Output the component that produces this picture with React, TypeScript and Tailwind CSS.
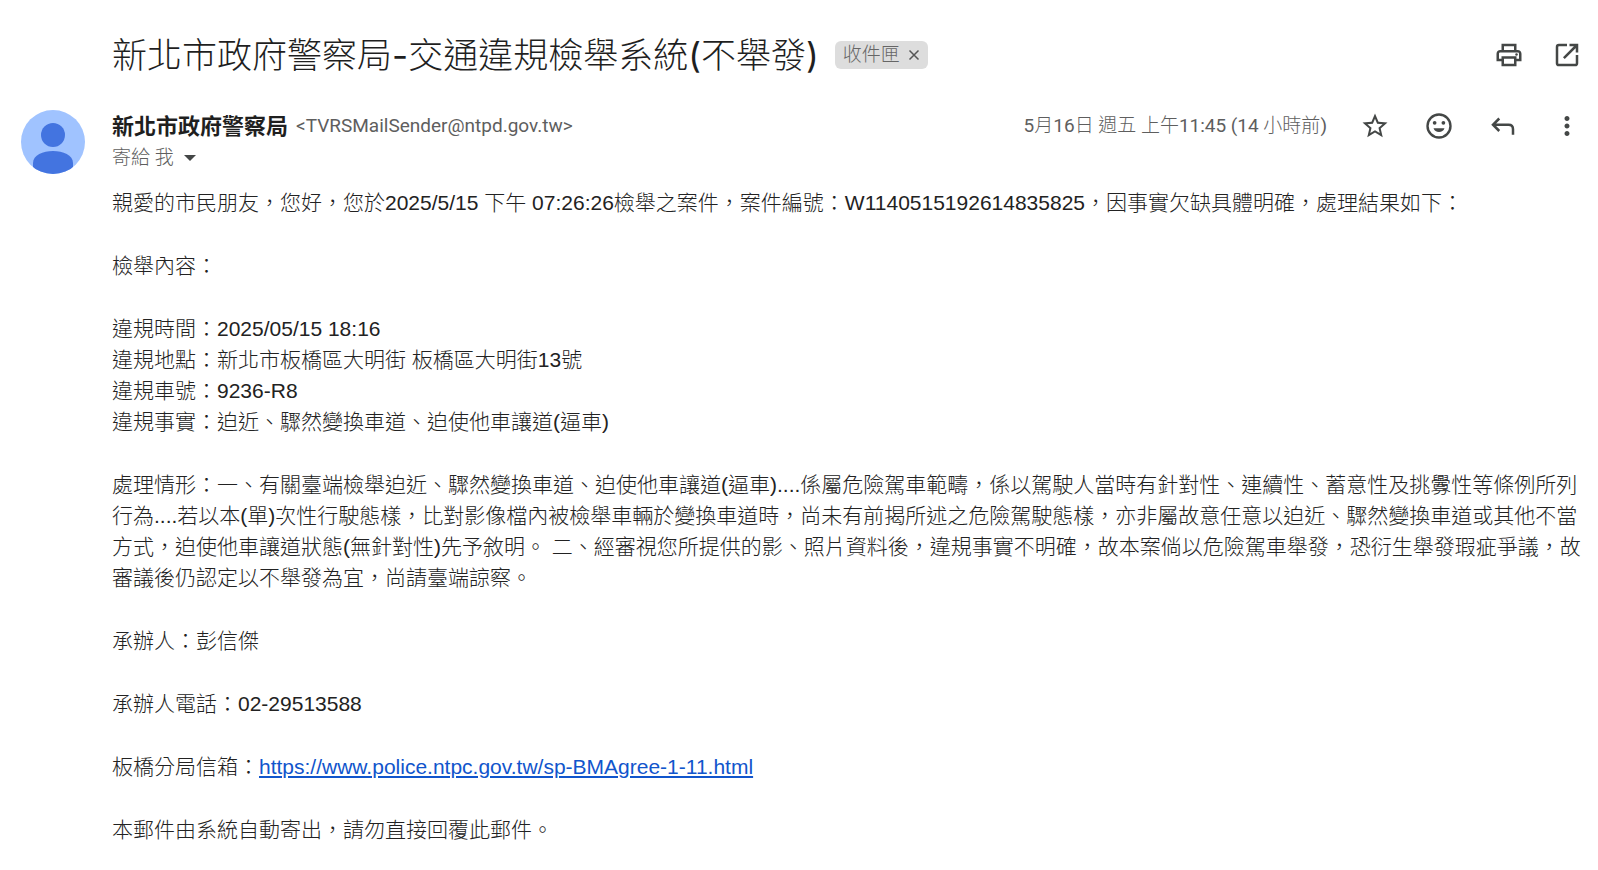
import { useState } from 'react';
import { MdMoreVert, MdOutlinePrint, MdStar, MdStarBorder } from 'react-icons/md';

const SENDER = '新北市政府警察局';
const REPORT_URL = 'https://www.police.ntpc.gov.tw/sp-BMAgree-1-11.html';

const titleFont = "font-[Inter,'Noto_Sans_CJK_TC',sans-serif]";
const uiFont = "font-[Roboto,'Noto_Sans_CJK_TC',sans-serif]";
const bodyFont = "font-['Liberation_Sans','Noto_Sans_CJK_TC',sans-serif]";

interface IconButtonProps {
  label: string;
  onClick?: () => void;
  children: React.ReactNode;
}

const IconButton: React.FC<IconButtonProps> = ({ label, onClick, children }) => (
  <button
    type="button"
    aria-label={label}
    title={label}
    onClick={onClick}
    className="flex size-8 items-center justify-center rounded-full text-[#444746] hover:bg-gray-100"
  >
    {children}
  </button>
);

// Light Chinese text with its Latin parts in regular weight
const MixedText = ({ text }: { text: string }) => (
  <>
    {text.split(/([!-~]+)/).map((part, i) =>
      i % 2 === 1 ? (
        <span key={i} className="font-normal">
          {part}
        </span>
      ) : (
        part
      )
    )}
  </>
);

const OpenInNewIcon = () => (
  <svg viewBox="0 0 24 24" className="size-[30px]" fill="none" stroke="currentColor" strokeWidth="2">
    <path d="M12 4H5.5Q4 4 4 5.5v13Q4 20 5.5 20h13q1.5 0 1.5-1.5V12" />
    <path d="M14 4h6v6M20 4L9.5 14.5" />
  </svg>
);

const EmojiIcon = () => (
  <svg viewBox="0 0 24 24" className="size-[30px]" fill="currentColor">
    <circle cx="12" cy="12" r="9.2" fill="none" stroke="currentColor" strokeWidth="1.9" />
    <circle cx="8.5" cy="9.4" r="1.5" />
    <circle cx="15.5" cy="9.4" r="1.5" />
    <path d="M7.6 13.8h8.8a4.7 4.7 0 0 1-8.8 0z" />
  </svg>
);

const ReplyIcon = () => (
  <svg viewBox="0 0 24 24" className="size-[30px]" fill="none" stroke="currentColor" strokeWidth="2">
    <path d="M9 6l-5 5 5 5M4 11h12.5q3.5 0 3.5 3.5V19" />
  </svg>
);

const Avatar = () => (
  <svg viewBox="0 0 64 64" className="size-16 shrink-0" role="img" aria-label={SENDER}>
    <clipPath id="avatar">
      <circle cx="32" cy="32" r="32" />
    </clipPath>
    <g clipPath="url(#avatar)">
      <rect width="64" height="64" fill="#a0c3ff" />
      <circle cx="32" cy="25" r="12" fill="#4374e0" />
      <path d="M12 53c0-8 10-12 20-12s20 4 20 12v11H12z" fill="#4374e0" />
    </g>
  </svg>
);

export default function App() {
  const [starred, setStarred] = useState(false);
  const [labelled, setLabelled] = useState(true);

  return (
    <main lang="zh-TW" className={`${uiFont} bg-white pt-[33px] pr-[15px] pb-6 pl-[21px] text-[#1f1f1f]`}>
      {/* Subject */}
      <header className="flex items-center gap-4 pl-[91px]">
        <h1 className={`${titleFont} text-[35px] leading-11 font-light`}>
          <MixedText text="新北市政府警察局-交通違規檢舉系統(不舉發)" />
        </h1>
        {labelled && (
          <span className="flex h-7 items-center gap-2 rounded-md bg-[#ddd] px-2 text-[19px] font-light text-[#666]">
            收件匣
            <button type="button" aria-label="移除標籤" onClick={() => setLabelled(false)}>
              <svg viewBox="0 0 12 12" className="size-3" fill="none" stroke="#555" strokeWidth="1.5">
                <path d="M1.5 1.5l9 9M10.5 1.5l-9 9" />
              </svg>
            </button>
          </span>
        )}
        <div className="ml-auto flex gap-[26px]">
          <IconButton label="全部列印">
            <MdOutlinePrint size={30} />
          </IconButton>
          <IconButton label="在新視窗中開啟">
            <OpenInNewIcon />
          </IconButton>
        </div>
      </header>

      {/* Sender */}
      <section className="mt-[33px] flex gap-[27px]">
        <Avatar />
        <div className="min-w-0 flex-1">
          <div className="flex h-8 items-center">
            <span className="text-[22px] font-bold">{SENDER}</span>
            <span className="ml-2 text-[19px] text-[#5e5e5e]">&lt;TVRSMailSender@ntpd.gov.tw&gt;</span>
            <time className="ml-auto text-[19px] font-light text-[#5e5e5e]" dateTime="2025-05-16T11:45">
              <MixedText text="5月16日 週五 上午11:45 (14 小時前)" />
            </time>
            <div className="ml-8 flex gap-8">
              <IconButton label="加上星號" onClick={() => setStarred(!starred)}>
                {starred ? <MdStar size={30} /> : <MdStarBorder size={30} />}
              </IconButton>
              <IconButton label="新增回應">
                <EmojiIcon />
              </IconButton>
              <IconButton label="回覆">
                <ReplyIcon />
              </IconButton>
              <IconButton label="更多">
                <MdMoreVert size={30} />
              </IconButton>
            </div>
          </div>
          <button type="button" className="flex h-8 items-center gap-2.5 text-[19px] font-light text-[#5e5e5e]">
            寄給 我
            <svg viewBox="0 0 12 6" className="w-3" fill="#444746">
              <path d="M0 0h12L6 6z" />
            </svg>
          </button>
        </div>
      </section>

      {/* Message body */}
      <article className={`${bodyFont} mt-[13px] flex flex-col gap-8 pl-[91px] text-[21px] leading-[31px] font-light text-[#222]`}>
        <p>
          親愛的市民朋友，您好，您於2025/5/15 下午 07:26:26檢舉之案件，案件編號：W1140515192614835825，因事實欠缺具體明確，處理結果如下：
        </p>
        <p>檢舉內容：</p>
        <p>
          違規時間：2025/05/15 18:16
          <br />
          違規地點：新北市板橋區大明街 板橋區大明街13號
          <br />
          違規車號：9236-R8
          <br />
          違規事實：迫近、驟然變換車道、迫使他車讓道(逼車)
        </p>
        <p>
          處理情形：一、有關臺端檢舉迫近、驟然變換車道、迫使他車讓道(逼車)....係屬危險駕車範疇，係以駕駛人當時有針對性、連續性、蓄意性及挑釁性等條例所列行為....若以本(單)次性行駛態樣，比對影像檔內被檢舉車輛於變換車道時，尚未有前揭所述之危險駕駛態樣，亦非屬故意任意以迫近、驟然變換車道或其他不當方式，迫使他車讓道狀態(無針對性)先予敘明。 二、經審視您所提供的影、照片資料後，違規事實不明確，故本案倘以危險駕車舉發，恐衍生舉發瑕疵爭議，故審議後仍認定以不舉發為宜，尚請臺端諒察。
        </p>
        <p>承辦人：彭信傑</p>
        <p>承辦人電話：02-29513588</p>
        <p>
          板橋分局信箱：
          <a href={REPORT_URL} className="text-[#15c] underline">
            {REPORT_URL}
          </a>
        </p>
        <p>本郵件由系統自動寄出，請勿直接回覆此郵件。</p>
      </article>
    </main>
  );
}
